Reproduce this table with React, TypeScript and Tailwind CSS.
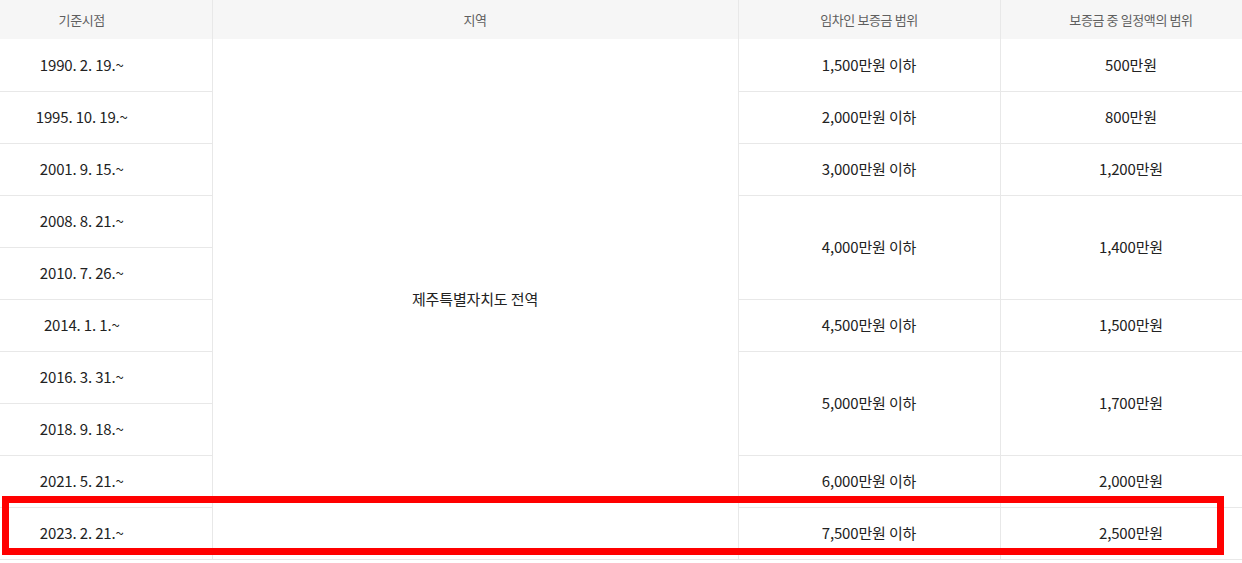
import React from 'react'

type Row = {
  date: string
  deposit?: string
  amount?: string
  span?: number
}

const rows: Row[] = [
  { date: '1990. 2. 19.~', deposit: '1,500만원 이하', amount: '500만원' },
  { date: '1995. 10. 19.~', deposit: '2,000만원 이하', amount: '800만원' },
  { date: '2001. 9. 15.~', deposit: '3,000만원 이하', amount: '1,200만원' },
  { date: '2008. 8. 21.~', deposit: '4,000만원 이하', amount: '1,400만원', span: 2 },
  { date: '2010. 7. 26.~' },
  { date: '2014. 1. 1.~', deposit: '4,500만원 이하', amount: '1,500만원' },
  { date: '2016. 3. 31.~', deposit: '5,000만원 이하', amount: '1,700만원', span: 2 },
  { date: '2018. 9. 18.~' },
  { date: '2021. 5. 21.~', deposit: '6,000만원 이하', amount: '2,000만원' },
  { date: '2023. 2. 21.~', deposit: '7,500만원 이하', amount: '2,500만원' },
]

const cell = 'h-[52px] border-b border-r border-[#e8e8e8] text-center align-middle p-0'
const head = 'h-[39px] border-r border-[#e8e8e8] bg-[#f6f6f6] text-center align-middle font-normal text-[13px] text-[#5f5f5f] tracking-[-0.03em] p-0'

export default function App() {
  return (
    <div
      className="relative w-[1242px] h-[563px] overflow-hidden bg-white"
      style={{ fontFamily: '"Noto Sans CJK KR", "Noto Sans", sans-serif' }}
    >
      <table className="table-fixed border-collapse w-[1262px] text-[15px] text-[#222] tracking-[-0.01em]">
        <colgroup>
          <col className="w-[212px]" />
          <col className="w-[526px]" />
          <col className="w-[262px]" />
          <col className="w-[262px]" />
        </colgroup>
        <thead>
          <tr>
            <th className={`${head} pr-12`}>기준시점</th>
            <th className={head}>지역</th>
            <th className={head}>임차인 보증금 범위</th>
            <th className={head}>보증금 중 일정액의 범위</th>
          </tr>
        </thead>
        <tbody>
          {rows.map((r, i) => (
            <tr key={r.date}>
              <td className={`${cell} pr-12`}>{r.date}</td>
              {i === 0 && (
                <td rowSpan={10} className={cell}>
                  제주특별자치도 전역
                </td>
              )}
              {r.deposit && (
                <td rowSpan={r.span ?? 1} className={cell}>
                  {r.deposit}
                </td>
              )}
              {r.amount && (
                <td rowSpan={r.span ?? 1} className={cell}>
                  {r.amount}
                </td>
              )}
            </tr>
          ))}
        </tbody>
      </table>

      {/* highlight box round the latest row */}
      <div className="absolute left-[2px] top-[496px] w-[1222px] h-[59px] border-[7px] border-[#ff0000] pointer-events-none" />
    </div>
  )
}
